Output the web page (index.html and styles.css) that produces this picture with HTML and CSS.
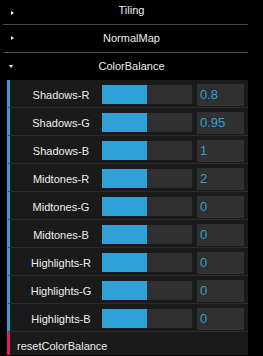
FILE: index.html
```html
<!DOCTYPE html>
<html lang="en">
<head>
    <meta charset="UTF-8">
    <title>ColorBalance</title>
    <link rel="stylesheet" href="styles.css">
</head>
<body>
<div class="gui">
    <div class="title closed cut"><span class="arrow"></span>Tiling</div>
    <div class="title closed"><span class="arrow"></span>NormalMap</div>
    <div class="title open last"><span class="arrow"></span>ColorBalance</div>

    <div class="row number">
        <span class="label">Shadows-R</span>
        <div class="slider"><div class="fill"></div></div>
        <div class="value">0.8</div>
    </div>
    <div class="row number">
        <span class="label">Shadows-G</span>
        <div class="slider"><div class="fill"></div></div>
        <div class="value">0.95</div>
    </div>
    <div class="row number">
        <span class="label">Shadows-B</span>
        <div class="slider"><div class="fill"></div></div>
        <div class="value">1</div>
    </div>
    <div class="row number">
        <span class="label">Midtones-R</span>
        <div class="slider"><div class="fill"></div></div>
        <div class="value">2</div>
    </div>
    <div class="row number">
        <span class="label">Midtones-G</span>
        <div class="slider"><div class="fill"></div></div>
        <div class="value">0</div>
    </div>
    <div class="row number">
        <span class="label">Midtones-B</span>
        <div class="slider"><div class="fill"></div></div>
        <div class="value">0</div>
    </div>
    <div class="row number">
        <span class="label">Highlights-R</span>
        <div class="slider"><div class="fill"></div></div>
        <div class="value">0</div>
    </div>
    <div class="row number">
        <span class="label">Highlights-G</span>
        <div class="slider"><div class="fill"></div></div>
        <div class="value">0</div>
    </div>
    <div class="row number">
        <span class="label">Highlights-B</span>
        <div class="slider"><div class="fill"></div></div>
        <div class="value">0</div>
    </div>
    <div class="row function">
        <span class="fn-label">resetColorBalance</span>
    </div>
</div>
</body>
</html>
```

FILE: styles.css
```css
html, body {
    margin: 0;
    background-color: #000000;
    overflow: hidden;
}

.gui {
    width: 245px;
    margin-left: 3px;
    font-family: "Liberation Sans", Arial, sans-serif;
    font-size: 11px;
    color: #eeeeee;
}

.title {
    position: relative;
    height: 27px;
    line-height: 27px;
    text-align: center;
    padding-left: 12px;
    border-bottom: 1px solid #4a4a4a;
}

.title.cut {
    height: 24px;
    line-height: 21px;
}

.title.last {
    border-bottom: none;
}

.arrow {
    position: absolute;
    left: 8px;
    top: 11px;
    width: 0;
    height: 0;
}

.closed .arrow {
    border-top: 2.5px solid transparent;
    border-bottom: 2.5px solid transparent;
    border-left: 3px solid #ffffff;
}

.open .arrow {
    top: 12px;
    left: 6px;
    border-left: 2.5px solid transparent;
    border-right: 2.5px solid transparent;
    border-top: 3px solid #ffffff;
}

.row {
    display: flex;
    align-items: center;
    height: 27px;
    margin-left: 4px;
    background-color: #1a1a1a;
    border-bottom: 1px solid #2c2c2c;
}

.number {
    border-left: 3px solid #2fa1d6;
}

.function {
    border-left: 3px solid #e61d5f;
    border-bottom: none;
    height: 23px;
}

.label {
    width: 82px;
    padding-left: 10px;
    text-align: center;
    padding-top: 2px;
}

.slider {
    width: 90px;
    height: 19px;
    margin-top: 2px;
    background-color: #303030;
}

.fill {
    width: 50%;
    height: 100%;
    background-color: #2fa1d6;
}

.value {
    width: 44px;
    height: 22px;
    line-height: 22px;
    margin-left: 5px;
    margin-top: 3px;
    padding-left: 3px;
    background-color: #303030;
    color: #2fa1d6;
    font-size: 13px;
}

.fn-label {
    padding-left: 7px;
    padding-top: 5px;
}
```
